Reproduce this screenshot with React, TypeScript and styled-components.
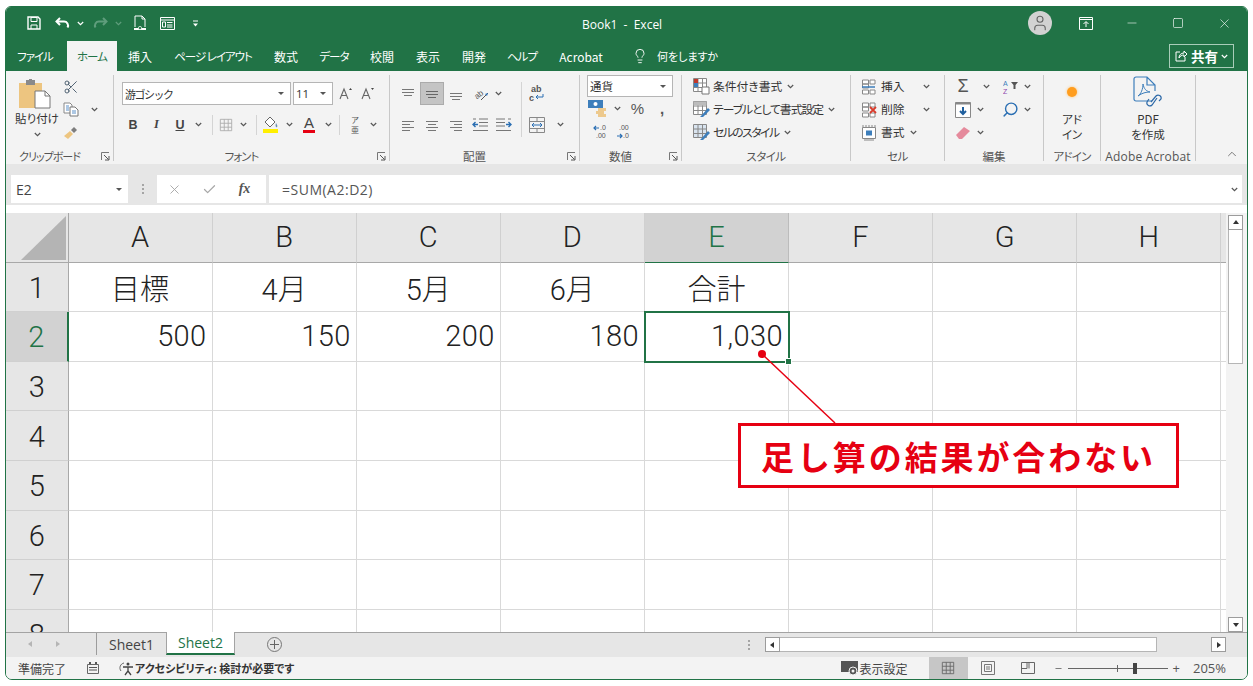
import styled, { createGlobalStyle } from "styled-components";
import { Scissors, X, Check, Minus, Square, Search, Lightbulb, ChevronUp, User } from "lucide-react";
import type { ReactNode } from "react";

const GREEN = "#217346";
const CJK = `"Noto Sans CJK JP", "Noto Sans", sans-serif`;
const LATIN = `"Open Sans", "Noto Sans CJK JP", sans-serif`;
const SHEET = `Roboto, "Noto Sans CJK JP", sans-serif`;

const GlobalStyle = createGlobalStyle`
  html, body { margin: 0; padding: 0; background: #fff; }
  body { font-family: ${CJK}; font-feature-settings: "palt"; overflow: hidden; }
  #root { width: 1253px; height: 686px; }
`;

const Chev = ({ color = "#555" }: { color?: string }) => (
  <svg width="7" height="5" viewBox="0 0 7 5">
    <polyline points="0.8,1 3.5,3.6 6.2,1" fill="none" stroke={color} strokeWidth="1.2" />
  </svg>
);

const Launcher = () => (
  <svg width="9" height="9" viewBox="0 0 9 9">
    <path d="M0.5 8V0.5H8" fill="none" stroke="#777" />
    <path d="M3 3l4.5 4.5M8 4v4H4" fill="none" stroke="#555" />
  </svg>
);

const Lines = ({ widths, color = "#777", w = 16 }: { widths: number[][]; color?: string; w?: number }) => (
  <svg width={w} height="14" viewBox={`0 0 ${w} 14`}>
    {widths.map(([y, x1, x2], i) => (
      <line key={i} x1={x1} x2={x2} y1={y + 0.5} y2={y + 0.5} stroke={color} />
    ))}
  </svg>
);

const GridIcon = ({ color = "#888", size = 16 }: { color?: string; size?: number }) => (
  <svg width={size} height={size} viewBox="0 0 16 16">
    <path d="M1.500 1.500h13v13h-13zM1.500 6h13M1.500 10.500h13M6 1.500v13M10.500 1.500v13" fill="none" stroke={color} />
  </svg>
);

const QatIcons = {
  save: (
    <svg width="14" height="14" viewBox="0 0 14 14">
      <path d="M1 1h10l2 2v10H1z" fill="none" stroke="#fff" strokeWidth="1.400" />
      <path d="M4 1.500h6v4H4zM4 13V9h6v4" fill="none" stroke="#fff" />
    </svg>
  ),
  undo: (
    <svg width="15" height="12" viewBox="0 0 15 12">
      <path d="M5 1L1.500 4.500 5 8" fill="none" stroke="#fff" strokeWidth="2" />
      <path d="M2 4.500h7a4 4 0 0 1 3.500 6" fill="none" stroke="#fff" strokeWidth="2" />
    </svg>
  ),
  redo: (
    <svg width="15" height="12" viewBox="0 0 15 12">
      <path d="M10 1l3.500 3.500L10 8" fill="none" stroke="#5f9d7c" strokeWidth="2" />
      <path d="M13 4.500H6a4 4 0 0 0-3.500 6" fill="none" stroke="#5f9d7c" strokeWidth="2" />
    </svg>
  ),
  preview: (
    <svg width="14" height="16" viewBox="0 0 14 16">
      <path d="M2 12V1h7l3 3v8M9 1v3h3" fill="none" stroke="#fff" />
      <path d="M1 13h12v2H1z" fill="#fff" />
      <circle cx="7" cy="13" r="1.600" fill={GREEN} stroke="#fff" strokeWidth=".7" />
    </svg>
  ),
  form: (
    <svg width="15" height="13" viewBox="0 0 15 13">
      <path d="M.5.5h14v12H.5zM.5 3h14" fill="none" stroke="#fff" />
      <path d="M2.500 5h3v5h-3zM7 5.500h5.500M7 8h5.500M7 10h5.500" fill="none" stroke="#fff" />
    </svg>
  ),
  custom: (
    <svg width="7" height="7" viewBox="0 0 7 7">
      <path d="M1 1h5" stroke="#fff" />
      <path d="M1 3.500h5L3.500 6.500z" fill="#fff" />
    </svg>
  ),
};

const PasteIcon = () => (
  <svg width="38" height="31" viewBox="0 0 38 31">
    <path d="M1 5h23v25H1z" fill="#edc580" />
    <path d="M8 2h9v5H8z" fill="#8a8a8a" />
    <path d="M11 1h3v2h-3z" fill="#8a8a8a" />
    <path d="M17 13h10l5 5v12H17z" fill="#fff" stroke="#777" />
    <path d="M27 13v5h5" fill="none" stroke="#777" />
  </svg>
);

const CopyIcon = () => (
  <svg width="16" height="15" viewBox="0 0 16 15">
    <path d="M1 1h6l2 2v8H1z" fill="#fff" stroke="#888" />
    <path d="M7 5h5l3 3v6H7z" fill="#fff" stroke="#777" />
    <path d="M3 4h3M3 6h3M3 8h3M9 9h4M9 11h4" stroke="#5b8fc7" />
  </svg>
);

const BrushIcon = () => (
  <svg width="16" height="14" viewBox="0 0 16 14">
    <path d="M1 10l6-5 3 3-5 5z" fill="#edc580" />
    <path d="M8 4l3-3 3 3-3 3z" fill="#7d7d7d" />
  </svg>
);

const FontSizeIcon = ({ up }: { up?: boolean }) => (
  <svg width="14" height="13" viewBox="0 0 14 13">
    <path d="M1 12L5 2l4 10M2.500 8.500h5" fill="none" stroke="#666" strokeWidth="1.100" />
    {up ? (
      <path d="M10 3l1.500-2L13 3z" fill="#444" />
    ) : (
      <path d="M10 1h3l-1.500 2z" fill="#444" />
    )}
  </svg>
);

const FillIcon = () => (
  <svg width="16" height="17" viewBox="0 0 16 17">
    <path d="M7 1l5 5-5 5-5-5z" fill="#fff" stroke="#666" />
    <path d="M13 7c1 2 2 3 1 4s-2-1-1-4z" fill="#6d8fb0" />
    <path d="M0 13h15v4H0z" fill="#ffef00" />
  </svg>
);

const OrientIcon = () => (
  <svg width="20" height="18" viewBox="0 0 20 18">
    <text x="3" y="12" fontSize="8" fill="#555" transform="rotate(-40 8 9)" fontFamily="Liberation Sans">ab</text>
    <path d="M10 15l7-7" stroke="#555" />
    <path d="M14 9l3-1-1 3z" fill="#2b6fb3" />
  </svg>
);

const IndentIcon = ({ flip }: { flip?: boolean }) => (
  <svg width="16" height="14" viewBox="0 0 16 14" style={{ transform: flip ? "scaleX(-1)" : undefined }}>
    <path d="M7 1h9M7 4.500h9M7 8h9M1 12.500h15M1 1h3" stroke="#777" />
    <path d="M6 6.500H1M3.500 4L1 6.500 3.500 9" fill="none" stroke="#2b6fb3" strokeWidth="1.400" />
  </svg>
);

const WrapIcon = () => (
  <svg width="16" height="19" viewBox="0 0 16 19">
    <text x="2" y="8" fontSize="9" fontWeight="700" fill="#555" fontFamily="Liberation Sans">ab</text>
    <text x="0" y="17" fontSize="9" fontWeight="700" fill="#555" fontFamily="Liberation Sans">c</text>
    <path d="M14 10v3H7M9 11l-2 2 2 2" fill="none" stroke="#2b6fb3" />
  </svg>
);

const MergeIcon = () => (
  <svg width="16" height="16" viewBox="0 0 16 16">
    <path d="M.5.5h15v15H.5zM.5 4.500h15M.5 11.500h15M8 .5v4M8 11.500v4" fill="none" stroke="#888" />
    <path d="M3 8h10M5 6L3 8l2 2M11 6l2 2-2 2" fill="none" stroke="#2b6fb3" />
  </svg>
);

const AccountIcon = () => (
  <svg width="20" height="17" viewBox="0 0 20 17">
    <path d="M0 0h15v8H0z" fill="#3d7ebb" />
    <circle cx="7.500" cy="4" r="2" fill="#fff" />
    <path d="M10 8h8v3h-8zM8 11h8v3H8zM10 14h8v3h-8z" fill="#edc98d" />
  </svg>
);

const DecimalIcon = ({ inc }: { inc?: boolean }) => (
  <svg width="18" height="16" viewBox="0 0 18 16" fontFamily="Liberation Sans" fontSize="7" fill="#555">
    {inc ? (
      <>
        <path d="M6 4H1M3 2L1 4l2 2" fill="none" stroke="#2b6fb3" strokeWidth="1.200" />
        <text x="7" y="6">.0</text>
        <text x="3" y="14">.00</text>
      </>
    ) : (
      <>
        <text x="4" y="6">.00</text>
        <path d="M2 12h5M5 10l2 2-2 2" fill="none" stroke="#2b6fb3" strokeWidth="1.200" />
        <text x="8" y="14">.0</text>
      </>
    )}
  </svg>
);

const TableTint = ({ kind }: { kind: "cond" | "table" | "style" }) => (
  <svg width="17" height="17" viewBox="0 0 17 17">
    <path d="M.5.5h13v13H.5zM.5 5h13M.5 9.500h13M5 .5v13M9.500.5v13" fill={kind === "style" ? "#d9e4ef" : "#fff"} stroke="#888" />
    {kind === "cond" && <path d="M1 1h4v4H1z" fill="#c0392b" />}
    {kind === "cond" && <path d="M1 5h4v4H1z" fill="#3d7ebb" />}
    {kind === "cond" && <path d="M9 9h7v7H9z" fill="#fff" stroke="#777" />}
    {kind !== "cond" && <path d="M8 15l7-8 2 2-7 7H7z" fill="#3d7ebb" />}
    {kind === "table" && <path d="M.5.5h13v4H.5z" fill="#bcbcbc" />}
  </svg>
);

const CellIcon = ({ kind }: { kind: "insert" | "delete" | "format" }) => (
  <svg width="16" height="16" viewBox="0 0 16 16">
    {kind === "format" ? (
      <>
        <path d="M1.500 2.500h13v11h-13z" fill="#fff" stroke="#888" />
        <path d="M5 5.500h6v5H5z" fill="#3d7ebb" />
        <path d="M1 1h14" stroke="#888" strokeDasharray="2 1" />
        <path d="M3 15h10" stroke="#888" />
      </>
    ) : (
      <>
        <path d="M1.500 1h6v4h-6zM1.500 5h6v4h-6zM1.500 11h6v4h-6zM9 1h5v4H9zM9 11h5v4H9z" fill="#fff" stroke="#888" />
        {kind === "insert" ? (
          <path d="M1 8h13" stroke="#3d7ebb" strokeWidth="1.500" />
        ) : (
          <path d="M9 5l6 6M15 5l-6 6" stroke="#d83b2b" strokeWidth="1.800" />
        )}
      </>
    )}
  </svg>
);

const SortIcon = () => (
  <svg width="16" height="16" viewBox="0 0 16 16">
    <text x="0" y="7" fontSize="7" fill="#3d7ebb" fontFamily="Liberation Sans">A</text>
    <text x="0" y="15" fontSize="7" fill="#8e44ad" fontFamily="Liberation Sans">Z</text>
    <path d="M8 3h7l-2.500 3v4h-2V6z" fill="#555" />
  </svg>
);

const FillDownIcon = () => (
  <svg width="16" height="16" viewBox="0 0 16 16">
    <path d="M.5.5h15v15H.5z" fill="#fff" stroke="#888" />
    <path d="M.5.5h15v2H.5z" fill="#888" />
    <path d="M8 5v7M5 9l3 3 3-3" fill="none" stroke="#1f5f9e" strokeWidth="2" />
  </svg>
);

const EraserIcon = () => (
  <svg width="16" height="14" viewBox="0 0 16 14">
    <path d="M1 9l8-8 6 4-8 8H4z" fill="#e58a9c" />
  </svg>
);

const AcrobatIcon = () => (
  <svg width="30" height="34" viewBox="0 0 30 34">
    <path d="M19 25H3a2 2 0 0 1-2-2V3a2 2 0 0 1 2-2h11l8 8v6M14 1v8h8" fill="none" stroke="#3d7ebb" strokeWidth="1.200" />
    <path d="M5 20c3-2 5-7 5-12 1 5 3 7 7 8-4 0-8 1-12 4z" fill="none" stroke="#3d7ebb" />
    <path d="M18 26l5-6a3 3 0 0 1 5 3l-2 2M24 22l-5 7a3 3 0 0 1-5-3l2-3" fill="none" stroke="#2f6aa8" strokeWidth="1.200" />
  </svg>
);

const Page = styled.div`
  padding: 6px 0 0 5px;
`;

const Window = styled.div`
  position: relative;
  box-sizing: border-box;
  width: 1243px;
  height: 674px;
  display: flex;
  flex-direction: column;
  border: 1px solid ${GREEN};
  border-radius: 6px 6px 7px 7px;
  overflow: hidden;
  background: #fff;
`;

const Tight = styled.span<{ $ls: number; $fs?: number }>`
  letter-spacing: ${(p) => p.$ls}px;
  ${(p) => (p.$fs ? `font-size: ${p.$fs}px;` : "")}
`;

const TitleBar = styled.div`
  height: 34px;
  flex: none;
  box-sizing: border-box;
  padding-bottom: 2px;
  display: flex;
  align-items: center;
  position: relative;
  background: ${GREEN};
  color: #fff;
`;

const QatSlot = styled.span<{ $ml: number }>`
  margin-left: ${(p) => p.$ml}px;
  display: inline-flex;
  align-items: center;
`;

const Title = styled.div`
  position: absolute;
  left: 576px;
  top: 9px;
  font: 12px/17px ${LATIN};
  white-space: pre;
`;

const WinControls = styled.div`
  margin-left: auto;
  display: flex;
  align-items: center;
`;

const Avatar = styled.span`
  width: 24px;
  height: 24px;
  border-radius: 50%;
  background: #d2d2d2;
  display: flex;
  align-items: center;
  justify-content: center;
  color: #666;
  margin-right: 11px;
`;

const WinBtn = styled.span`
  width: 46px;
  display: flex;
  justify-content: center;
`;

const TabBar = styled.div`
  height: 30px;
  flex: none;
  display: flex;
  align-items: stretch;
  background: ${GREEN};
  padding-left: 1px;
`;

const Tab = styled.div<{ $w: number; $active?: boolean; $ml?: number; $kana?: boolean }>`
  width: ${(p) => p.$w}px;
  margin-left: ${(p) => p.$ml ?? 0}px;
  display: flex;
  align-items: center;
  justify-content: center;
  font-size: ${(p) => (p.$kana ? 11.5 : 12)}px;
  letter-spacing: ${(p) => (p.$kana ? -1 : 0)}px;
  white-space: nowrap;
  color: ${(p) => (p.$active ? GREEN : "#fff")};
  background: ${(p) => (p.$active ? "#f3f3f3" : "transparent")};
`;

const TellMe = styled.div`
  margin-left: 17px;
  display: flex;
  align-items: center;
  gap: 9px;
  color: #fff;
  font-size: 11px;
`;

const ShareBtn = styled.div`
  margin: 3px 13px 3px auto;
  box-sizing: border-box;
  width: 65px;
  display: flex;
  align-items: center;
  justify-content: center;
  gap: 3px;
  border: 1px solid #a9cdb9;
  color: #fff;
  font-size: 13.500px;
  font-weight: 700;
`;

const Ribbon = styled.div`
  height: 93px;
  flex: none;
  box-sizing: border-box;
  padding: 4px 0 3px;
  display: flex;
  background: #f3f3f3;
  color: #333;
`;

const Group = styled.div<{ $w: number }>`
  width: ${(p) => p.$w}px;
  box-sizing: border-box;
  flex: none;
  display: flex;
  flex-direction: column;
  border-right: 1px solid #c8c8c8;
`;

const GroupBody = styled.div<{ $pl?: number; $pt?: number; $col?: boolean }>`
  height: 72px;
  flex: none;
  box-sizing: border-box;
  padding: ${(p) => p.$pt ?? 0}px 0 0 ${(p) => p.$pl ?? 0}px;
  display: flex;
  flex-direction: ${(p) => (p.$col ? "column" : "row")};
`;

const GroupLabel = styled.div`
  display: flex;
  align-items: center;
  flex: none;
  height: 15px;
  margin-top: 2px;
  font-size: 11.500px;
  line-height: 15px;
  color: #555;
  white-space: nowrap;
`;

const LabelText = styled.span`
  flex: 1;
  text-align: center;
`;

const LauncherSlot = styled.span`
  width: 20px;
  flex: none;
  display: flex;
  justify-content: flex-end;
  padding-right: 3px;
  box-sizing: border-box;
`;

const LatinLabel = styled.span`
  font: 12px ${LATIN};
  letter-spacing: 0.2px;
`;

const RibbonEnd = styled.div`
  flex: 1;
  display: flex;
  align-items: flex-end;
  justify-content: flex-end;
  padding-right: 8px;
  color: #555;
`;

const Row = styled.div<{ $h?: number; $pl?: number }>`
  height: ${(p) => p.$h ?? 23}px;
  flex: none;
  display: flex;
  align-items: center;
  padding-left: ${(p) => p.$pl ?? 0}px;
`;

const Tool = styled.span<{ $w: number; $selected?: boolean }>`
  width: ${(p) => p.$w}px;
  height: 23px;
  flex: none;
  display: flex;
  align-items: center;
  justify-content: center;
  box-sizing: border-box;
  background: ${(p) => (p.$selected ? "#c4c4c4" : "transparent")};
  border: ${(p) => (p.$selected ? "1px solid #ababab" : "none")};
`;

const Sep = styled.span<{ $w: number }>`
  width: ${(p) => p.$w}px;
  height: 20px;
  flex: none;
  display: flex;
  justify-content: center;
  &::before {
    content: "";
    width: 1px;
    background: #d4d4d4;
  }
`;

const FullSep = styled(Sep)`
  height: 55px;
`;

const PasteCol = styled.div`
  width: 46px;
  flex: none;
  display: flex;
  flex-direction: column;
  align-items: center;
  padding-top: 3px;
  font-size: 11.500px;
  line-height: 15px;
  white-space: nowrap;
  color: #333;
`;

const PasteText = styled.span`
  margin-top: 2px;
  margin-bottom: 6px;
`;

const ToolCol = styled.div<{ $pt?: number }>`
  display: flex;
  flex-direction: column;
  padding-top: ${(p) => p.$pt ?? 0}px;
`;

const SelectBox = styled.div<{ $w: number; $latin?: boolean; $h?: number }>`
  width: ${(p) => p.$w}px;
  height: ${(p) => p.$h ?? 23}px;
  box-sizing: border-box;
  display: flex;
  align-items: center;
  justify-content: space-between;
  padding: 0 6px 0 2px;
  background: #fff;
  border: 1px solid #b5b5b5;
  font: ${(p) => (p.$latin ? `11.500px ${LATIN}` : `11.500px ${CJK}`)};
  color: #333;
  & + & { margin-left: 2px; }
`;

const Caret = styled.span`
  width: 0;
  height: 0;
  border-left: 3px solid transparent;
  border-right: 3px solid transparent;
  border-top: 3px solid #555;
`;

const GlyphA = styled.span<{ $size?: number }>`
  font: ${(p) => p.$size ?? 13}px "Liberation Sans", sans-serif;
  color: #555;
`;

const FormatGlyph = styled.span<{ $italic?: boolean; $underline?: boolean }>`
  font-style: ${(p) => (p.$italic ? "italic" : "normal")};
  font-weight: 700;
  font-size: 12.500px;
  font-family: ${(p) => (p.$italic ? `"Liberation Serif", serif` : `"Liberation Sans", sans-serif`)};
  text-decoration: ${(p) => (p.$underline ? "underline" : "none")};
  color: #444;
`;

const FontColorA = styled.span`
  font: 400 15px/14px "Liberation Sans", sans-serif;
  color: #444;
  border-bottom: 3px solid #e60012;
  padding: 0 1px;
`;

const Ruby = styled.span`
  font-size: 8px;
  line-height: 10px;
  color: #555;
  text-align: center;
  width: 10px;
`;

const ActionRow = styled.div<{ $pl?: number }>`
  height: 23px;
  flex: none;
  display: flex;
  align-items: center;
  padding-left: ${(p) => p.$pl ?? 2}px;
  font-size: 11.800px;
  color: #333;
  white-space: nowrap;
`;

const ActionText = styled.span<{ $ml: number; $mr: number; $ls?: number }>`
  margin-left: ${(p) => p.$ml}px;
  margin-right: ${(p) => p.$mr}px;
  padding-bottom: 2px;
  letter-spacing: ${(p) => p.$ls ?? 0}px;
`;

const CenterCol = styled.div<{ $pt: number }>`
  width: 100%;
  padding-top: ${(p) => p.$pt}px;
  display: flex;
  flex-direction: column;
  align-items: center;
  font-size: 11.500px;
  line-height: 15px;
  color: #333;
  text-align: center;
`;

const AddinDot = styled.span`
  width: 10px;
  height: 10px;
  border-radius: 50%;
  background: #ff9d1e;
  box-shadow: 0 0 3px #ffc16e;
  margin-bottom: 15px;
`;

const AcrobatGap = styled.span`
  margin-bottom: 2px;
  display: flex;
`;

const FormulaBar = styled.div`
  height: 41px;
  flex: none;
  box-sizing: border-box;
  padding: 11px 5px 2px 5px;
  display: flex;
  align-items: stretch;
  background: #e6e6e6;
`;

const NameBox = styled.div`
  width: 117px;
  box-sizing: border-box;
  padding: 0 6px 0 5px;
  display: flex;
  align-items: center;
  justify-content: space-between;
  background: #fff;
  font: 14px ${LATIN};
  color: #444;
`;

const GripDots = styled.span`
  width: 29px;
  display: flex;
  flex-direction: column;
  align-items: center;
  justify-content: center;
  gap: 2px;
  & > i {
    width: 2px;
    height: 2px;
    background: #a5a5a5;
  }
`;

const FxBox = styled.div`
  width: 109px;
  display: flex;
  align-items: center;
  background: #fff;
  color: #a8a8a8;
`;

const FxSlot = styled.span`
  width: 35px;
  display: flex;
  justify-content: center;
`;

const FxText = styled.span`
  font: italic 700 14px "Liberation Serif", serif;
  color: #555;
`;

const FormulaInput = styled.div`
  flex: 1;
  margin-left: 3px;
  padding: 0 4px 0 13px;
  display: flex;
  align-items: center;
  justify-content: space-between;
  background: #fff;
  font: 14px ${LATIN};
  letter-spacing: 0.5px;
  color: #555;
`;

const SheetArea = styled.div`
  flex: 1;
  min-height: 0;
  display: flex;
  padding-top: 8px;
  background: #fff;
`;

const SheetGrid = styled.div`
  width: 1220px;
  flex: none;
  overflow: hidden;
  display: grid;
  grid-template-columns: 62.500px repeat(8, 144.100px) 1fr;
  grid-template-rows: 49.600px;
  grid-auto-rows: 49.600px;
`;

const HeaderCell = styled.div<{ $selected?: boolean }>`
  box-sizing: border-box;
  display: flex;
  align-items: center;
  justify-content: center;
  background: ${(p) => (p.$selected ? "#d2d2d2" : "#e6e6e6")};
  color: ${(p) => (p.$selected ? GREEN : "#222")};
  border-right: 1px solid ${(p) => (p.$selected ? "#bcbcbc" : "#d0d0d0")};
  font: 300 29px ${SHEET};
`;

const ColHeader = styled(HeaderCell)`
  border-bottom: 1.500px solid ${(p) => (p.$selected ? GREEN : "#a8a8a8")};
`;

const RowHeader = styled(HeaderCell)`
  padding-top: 2px;
  border-bottom: 1px solid #d0d0d0;
  border-right: ${(p) => (p.$selected ? `2px solid ${GREEN}` : "1px solid #a8a8a8")};
`;

const Corner = styled(HeaderCell)`
  align-items: flex-end;
  justify-content: flex-end;
  padding: 0 2px 2px 0;
  border-right: 1px solid #a8a8a8;
  border-bottom: 1.500px solid #a8a8a8;
`;

const Cell = styled.div<{ $align?: string; $selected?: boolean }>`
  position: relative;
  box-sizing: border-box;
  display: flex;
  align-items: center;
  justify-content: ${(p) => (p.$align === "right" ? "flex-end" : "center")};
  padding: 0 5px;
  border-right: 1px solid #d9d9d9;
  border-bottom: 1px solid #d9d9d9;
  font: 300 29px ${SHEET};
  font-feature-settings: normal;
  letter-spacing: ${(p) => (p.$align === "right" ? 0.4 : 0)}px;
  color: #222;
  white-space: nowrap;
  ${(p) =>
    p.$selected &&
    `
    outline: 2px solid ${GREEN};
    outline-offset: -1px;
    z-index: 1;
    &::after {
      content: "";
      position: absolute;
      right: -4px;
      bottom: -4px;
      width: 5px;
      height: 5px;
      background: ${GREEN};
      border: 1px solid #fff;
    }
  `}
`;

const VScroll = styled.div`
  flex: 1;
  display: flex;
  flex-direction: column;
  padding: 2px 4px 0 2px;
  background: #f3f3f3;
`;

const ScrollBtn = styled.div<{ $w?: number }>`
  box-sizing: border-box;
  width: ${(p) => p.$w ?? 15}px;
  height: 15px;
  flex: none;
  display: flex;
  align-items: center;
  justify-content: center;
  background: #fff;
  border: 1px solid #9c9c9c;
`;

const VThumb = styled.div`
  height: 134px;
  flex: none;
  box-sizing: border-box;
  background: #fff;
  border: 1px solid #b5b5b5;
  border-top: none;
`;

const VSpacer = styled.div`
  flex: 1;
`;

const Arrow = styled.span<{ $dir: "up" | "down" | "left" | "right"; $color?: string }>`
  width: 0;
  height: 0;
  border: 3.500px solid transparent;
  ${(p) => {
    const side = { up: "bottom", down: "top", left: "right", right: "left" }[p.$dir];
    const c = p.$color ?? "#333";
    return `border-${side}: 4px solid ${c};`;
  }}
  ${(p) => (p.$dir === "up" ? "margin-top: -4px;" : "")}
  ${(p) => (p.$dir === "down" ? "margin-top: 4px;" : "")}
  ${(p) => (p.$dir === "left" ? "margin-left: -4px;" : "")}
  ${(p) => (p.$dir === "right" ? "margin-left: 4px;" : "")}
`;

const SheetBar = styled.div`
  height: 25px;
  flex: none;
  box-sizing: border-box;
  display: flex;
  align-items: flex-start;
  background: #e6e6e6;
  border-top: 1px solid #a3a3a3;
`;

const NavArrows = styled.div`
  width: 91px;
  height: 22px;
  box-sizing: border-box;
  padding-left: 23px;
  display: flex;
  align-items: center;
  gap: 20px;
  border-right: 1px solid #9c9c9c;
  flex: none;
`;

const SheetTab = styled.div<{ $active?: boolean }>`
  box-sizing: border-box;
  width: 69px;
  height: ${(p) => (p.$active ? 23 : 22)}px;
  margin-top: ${(p) => (p.$active ? -1 : 0)}px;
  display: flex;
  align-items: center;
  justify-content: center;
  font: 14px ${LATIN};
  color: ${(p) => (p.$active ? GREEN : "#444")};
  background: ${(p) => (p.$active ? "#fff" : "transparent")};
  ${(p) => (p.$active ? `border-bottom: 2px solid ${GREEN}; border-left: 1px solid #a3a3a3; border-right: 1px solid #a3a3a3;` : "")}
`;

const AddSheet = styled.span`
  margin: 4px 0 0 32px;
  width: 15px;
  height: 15px;
  box-sizing: border-box;
  border: 1px solid #777;
  border-radius: 50%;
  display: flex;
  align-items: center;
  justify-content: center;
  color: #666;
`;

const HScroll = styled.div`
  margin-left: auto;
  margin-right: 21px;
  margin-top: 4px;
  display: flex;
  align-items: center;
`;

const HDots = styled(GripDots)`
  width: 16px;
  margin-right: 8px;
`;

const HThumb = styled.div`
  width: 377px;
  height: 15px;
  box-sizing: border-box;
  background: #fff;
  border: 1px solid #b5b5b5;
  border-left: none;
  margin-right: 54px;
`;

const StatusBar = styled.div`
  height: 22px;
  flex: none;
  display: flex;
  align-items: stretch;
  background: #f3f3f3;
  font-size: 12px;
  color: #444;
`;

const StatusItem = styled.span<{ $ml: number; $bold?: boolean }>`
  margin-left: ${(p) => p.$ml}px;
  display: flex;
  align-items: center;
  gap: 1px;
  white-space: nowrap;
  font-weight: ${(p) => (p.$bold ? 700 : 400)};
  font-size: ${(p) => (p.$bold ? 11 : 12)}px;
  color: ${(p) => (p.$bold ? "#333" : "#444")};
`;

const StatusRight = styled.div`
  margin-left: auto;
  display: flex;
  align-items: stretch;
  padding-right: 21px;
`;

const ViewBtn = styled.span<{ $active?: boolean }>`
  width: 39px;
  margin-left: ${(p) => (p.$active ? 21 : 1)}px;
  display: flex;
  align-items: center;
  justify-content: center;
  background: ${(p) => (p.$active ? "#c6c6c6" : "transparent")};
`;

const Zoomer = styled.span`
  display: flex;
  align-items: center;
  margin-left: 6px;
  color: #555;
  font: 13px ${LATIN};
`;

const SliderTrack = styled.span`
  position: relative;
  width: 100px;
  height: 1px;
  margin: 0 5px;
  background: #666;
`;

const SliderTick = styled.span`
  position: absolute;
  left: 49px;
  top: -3px;
  width: 1px;
  height: 7px;
  background: #666;
`;

const SliderThumb = styled.span`
  position: absolute;
  left: 65px;
  top: -5px;
  width: 4px;
  height: 11px;
  background: #444;
`;

const ZoomPct = styled.span`
  margin-left: 13px;
`;

const Connector = styled.svg`
  position: absolute;
  left: 744px;
  top: 338px;
  z-index: 2;
`;

const Callout = styled.div`
  position: absolute;
  left: 732px;
  top: 416px;
  width: 441px;
  height: 65px;
  box-sizing: border-box;
  z-index: 2;
  display: flex;
  align-items: center;
  justify-content: center;
  background: #fff;
  border: 3px solid #e60012;
  color: #e60012;
  font: 700 33px ${CJK};
  font-feature-settings: normal;
  letter-spacing: 2.900px;
`;

const columns = ["A", "B", "C", "D", "E", "F", "G", "H"];
const sheetRows: Record<number, { text: string; align?: string }[]> = {
  1: [{ text: "目標" }, { text: "4月" }, { text: "5月" }, { text: "6月" }, { text: "合計" }],
  2: [
    { text: "500", align: "right" },
    { text: "150", align: "right" },
    { text: "200", align: "right" },
    { text: "180", align: "right" },
    { text: "1,030", align: "right" },
  ],
};

const tabs: { label: string; w: number; ml?: number; active?: boolean; kana?: boolean }[] = [
  { label: "ファイル", w: 56, kana: true },
  { label: "ホーム", w: 50, ml: 4, active: true, kana: true },
  { label: "挿入", w: 46 },
  { label: "ページ レイアウト", w: 100, kana: true },
  { label: "数式", w: 46 },
  { label: "データ", w: 50, kana: true },
  { label: "校閲", w: 46 },
  { label: "表示", w: 46 },
  { label: "開発", w: 46 },
  { label: "ヘルプ", w: 50, kana: true },
  { label: "Acrobat", w: 68 },
];

function RibbonGroup({ w, label, launcher, children }: { w: number; label: ReactNode; launcher?: boolean; children: ReactNode }) {
  return (
    <Group $w={w}>
      {children}
      <GroupLabel>
        <LabelText>{label}</LabelText>
        {launcher && <LauncherSlot><Launcher /></LauncherSlot>}
      </GroupLabel>
    </Group>
  );
}

function Rows({ r }: { r: number }) {
  const data = sheetRows[r] ?? [];
  return (
    <>
      <RowHeader $selected={r === 2}>{r}</RowHeader>
      {columns.map((c, i) => (
        <Cell key={c} $align={data[i]?.align} $selected={r === 2 && c === "E"}>
          {data[i]?.text}
        </Cell>
      ))}
      <Cell />
    </>
  );
}

export default function App() {
  return (
    <>
      <GlobalStyle />
      <Page>
        <Window>
          <TitleBar>
            <QatSlot $ml={21}>{QatIcons.save}</QatSlot>
            <QatSlot $ml={14}>{QatIcons.undo}</QatSlot>
            <QatSlot $ml={7}><Chev color="#fff" /></QatSlot>
            <QatSlot $ml={9}>{QatIcons.redo}</QatSlot>
            <QatSlot $ml={7}><Chev color="#5f9d7c" /></QatSlot>
            <QatSlot $ml={11}>{QatIcons.preview}</QatSlot>
            <QatSlot $ml={13}>{QatIcons.form}</QatSlot>
            <QatSlot $ml={17}>{QatIcons.custom}</QatSlot>
            <Title>Book1  -  Excel</Title>
            <WinControls>
              <Avatar><User size={18} strokeWidth={1.500} /></Avatar>
              <WinBtn>
                <svg width="14" height="13" viewBox="0 0 14 13">
                  <path d="M.5.5h13v12H.5zM.5 2.500h13" fill="none" stroke="#fff" />
                  <path d="M7 10V5M4.500 7L7 4.500 9.500 7" fill="none" stroke="#fff" />
                </svg>
              </WinBtn>
              <WinBtn><Minus size={14} strokeWidth={1} /></WinBtn>
              <WinBtn><Square size={12} strokeWidth={1.300} /></WinBtn>
              <WinBtn><X size={15} strokeWidth={1} /></WinBtn>
            </WinControls>
          </TitleBar>

          <TabBar>
            {tabs.map((t) => (
              <Tab key={t.label} $w={t.w} $ml={t.ml} $active={t.active} $kana={t.kana}>{t.label}</Tab>
            ))}
            <TellMe>
              <Lightbulb size={16} strokeWidth={1.400} />
              何をしますか
            </TellMe>
            <ShareBtn>
              <svg width="13" height="12" viewBox="0 0 13 12">
                <path d="M5 2H1v9h9V7M4 8c0-3 2-5 5-5V1l3 3-3 3V5C7 5 5 6 4 8z" fill="none" stroke="#fff" />
              </svg>
              共有
              <Chev color="#fff" />
            </ShareBtn>
          </TabBar>

          <Ribbon>
            <RibbonGroup w={108} label={<Tight $ls={-1} $fs={11}>クリップボード</Tight>} launcher>
              <GroupBody $pl={8}>
                <PasteCol>
                  <PasteIcon />
                  <PasteText>貼り付け</PasteText>
                  <Chev />
                </PasteCol>
                <ToolCol>
                  <Tool $w={22}><Scissors size={16} color="#46596b" strokeWidth={1.400} /></Tool>
                  <Tool $w={22}><CopyIcon /></Tool>
                  <Tool $w={22}><BrushIcon /></Tool>
                </ToolCol>
                <ToolCol $pt={23}>
                  <Tool $w={24}><Chev /></Tool>
                </ToolCol>
              </GroupBody>
            </RibbonGroup>

            <RibbonGroup w={276} label={<Tight $ls={-1}>フォント</Tight>} launcher>
              <GroupBody $pl={8} $pt={7} $col>
                <Row>
                  <SelectBox $w={169}><Tight $ls={-1.500} $fs={11}>游ゴシック</Tight><Caret /></SelectBox>
                  <SelectBox $w={40} $latin>11<Caret /></SelectBox>
                  <Tool $w={25}><FontSizeIcon up /></Tool>
                  <Tool $w={20}><FontSizeIcon /></Tool>
                </Row>
                <Row $h={8} />
                <Row>
                  <Tool $w={22}><FormatGlyph>B</FormatGlyph></Tool>
                  <Tool $w={25}><FormatGlyph $italic>I</FormatGlyph></Tool>
                  <Tool $w={22}><FormatGlyph $underline>U</FormatGlyph></Tool>
                  <Tool $w={15}><Chev /></Tool>
                  <Sep $w={12} />
                  <Tool $w={16}><GridIcon color="#aaa" size={14} /></Tool>
                  <Tool $w={18}><Chev /></Tool>
                  <Sep $w={8} />
                  <Tool $w={22}><FillIcon /></Tool>
                  <Tool $w={14}><Chev /></Tool>
                  <Tool $w={26}><FontColorA>A</FontColorA></Tool>
                  <Tool $w={12}><Chev /></Tool>
                  <Sep $w={10} />
                  <Tool $w={22}><Ruby>ア<br />亜</Ruby></Tool>
                  <Tool $w={14}><Chev /></Tool>
                </Row>
              </GroupBody>
            </RibbonGroup>

            <RibbonGroup w={190} label="配置" launcher>
              <GroupBody $pl={6} $pt={7}>
                <ToolCol>
                  <Row>
                    <Tool $w={24}><Lines widths={[[2, 2, 14], [5, 2, 14], [8, 4, 12]]} /></Tool>
                    <Tool $w={24} $selected><Lines widths={[[4, 2, 14], [7, 2, 14], [10, 4, 12]]} color="#666" /></Tool>
                    <Tool $w={24}><Lines widths={[[6, 2, 14], [9, 2, 14], [12, 4, 12]]} /></Tool>
                    <Tool $w={25}><OrientIcon /></Tool>
                    <Tool $w={10}><Chev /></Tool>
                  </Row>
                  <Row $h={8} />
                  <Row>
                    <Tool $w={24}><Lines widths={[[3, 2, 14], [6, 2, 10], [9, 2, 14], [12, 2, 10]]} /></Tool>
                    <Tool $w={24}><Lines widths={[[3, 2, 14], [6, 4, 12], [9, 2, 14], [12, 4, 12]]} /></Tool>
                    <Tool $w={24}><Lines widths={[[3, 2, 14], [6, 6, 14], [9, 2, 14], [12, 6, 14]]} /></Tool>
                    <Tool $w={24}><IndentIcon /></Tool>
                    <Tool $w={24}><IndentIcon flip /></Tool>
                  </Row>
                </ToolCol>
                <FullSep $w={10} />
                <ToolCol>
                  <Row><Tool $w={22}><WrapIcon /></Tool></Row>
                  <Row $h={8} />
                  <Row>
                    <Tool $w={22}><MergeIcon /></Tool>
                    <Tool $w={24}><Chev /></Tool>
                  </Row>
                </ToolCol>
              </GroupBody>
            </RibbonGroup>

            <RibbonGroup w={102} label="数値" launcher>
              <GroupBody $pl={7} $col>
                <SelectBox $w={86} $h={22}>通貨<Caret /></SelectBox>
                <Row>
                  <Tool $w={22}><AccountIcon /></Tool>
                  <Tool $w={16}><Chev /></Tool>
                  <Tool $w={25}><GlyphA $size={15}>%</GlyphA></Tool>
                  <Tool $w={24}><GlyphA $size={15}><b>,</b></GlyphA></Tool>
                </Row>
                <Row $pl={4}>
                  <Tool $w={22}><DecimalIcon inc /></Tool>
                  <Tool $w={22}><DecimalIcon /></Tool>
                </Row>
              </GroupBody>
            </RibbonGroup>

            <RibbonGroup w={169} label={<Tight $ls={-0.500}>スタイル</Tight>}>
              <GroupBody $col>
                <ActionRow $pl={11}><TableTint kind="cond" /><ActionText $ml={3} $mr={5}>条件付き書式</ActionText><Chev /></ActionRow>
                <ActionRow $pl={11}><TableTint kind="table" /><ActionText $ml={3} $mr={5} $ls={-1}>テーブルとして書式設定</ActionText><Chev /></ActionRow>
                <ActionRow $pl={11}><TableTint kind="style" /><ActionText $ml={3} $mr={5} $ls={-1.500}>セルのスタイル</ActionText><Chev /></ActionRow>
              </GroupBody>
            </RibbonGroup>

            <RibbonGroup w={94} label={<Tight $ls={-0.500}>セル</Tight>}>
              <GroupBody $col>
                <ActionRow $pl={10}><CellIcon kind="insert" /><ActionText $ml={4} $mr={18}>挿入</ActionText><Chev /></ActionRow>
                <ActionRow $pl={10}><CellIcon kind="delete" /><ActionText $ml={4} $mr={18}>削除</ActionText><Chev /></ActionRow>
                <ActionRow $pl={10}><CellIcon kind="format" /><ActionText $ml={4} $mr={5}>書式</ActionText><Chev /></ActionRow>
              </GroupBody>
            </RibbonGroup>

            <RibbonGroup w={99} label="編集">
              <GroupBody $pl={7} $col>
                <Row>
                  <Tool $w={22}><GlyphA $size={18}>Σ</GlyphA></Tool>
                  <Tool $w={24}><Chev /></Tool>
                  <Tool $w={25}><SortIcon /></Tool>
                  <Tool $w={8}><Chev /></Tool>
                </Row>
                <Row>
                  <Tool $w={22}><FillDownIcon /></Tool>
                  <Tool $w={12}><Chev /></Tool>
                  <Tool $w={12} />
                  <Tool $w={25}><Search size={17} color="#2b6fb3" strokeWidth={2} style={{ transform: "scaleX(-1)" }} /></Tool>
                  <Tool $w={8}><Chev /></Tool>
                </Row>
                <Row>
                  <Tool $w={22}><EraserIcon /></Tool>
                  <Tool $w={12}><Chev /></Tool>
                </Row>
              </GroupBody>
            </RibbonGroup>

            <RibbonGroup w={57} label={<Tight $ls={-0.700}>アドイン</Tight>}>
              <GroupBody>
                <CenterCol $pt={12}>
                  <AddinDot />
                  アド<br />イン
                </CenterCol>
              </GroupBody>
            </RibbonGroup>

            <RibbonGroup w={95} label={<LatinLabel>Adobe Acrobat</LatinLabel>}>
              <GroupBody>
                <CenterCol $pt={1}>
                  <AcrobatGap><AcrobatIcon /></AcrobatGap>
                  PDF<br />を作成
                </CenterCol>
              </GroupBody>
            </RibbonGroup>

            <RibbonEnd><ChevronUp size={14} strokeWidth={1.300} /></RibbonEnd>
          </Ribbon>

          <FormulaBar>
            <NameBox>E2<Caret /></NameBox>
            <GripDots><i /><i /><i /></GripDots>
            <FxBox>
              <FxSlot><X size={15} strokeWidth={1.500} /></FxSlot>
              <FxSlot><Check size={15} strokeWidth={2} /></FxSlot>
              <FxSlot><FxText>fx</FxText></FxSlot>
            </FxBox>
            <FormulaInput>=SUM(A2:D2)<Chev /></FormulaInput>
          </FormulaBar>

          <SheetArea>
            <SheetGrid>
              <Corner>
                <svg width="45" height="44" viewBox="0 0 45 44">
                  <path d="M0 44L45 0v44z" fill="#b4b4b4" />
                </svg>
              </Corner>
              {columns.map((c) => (
                <ColHeader key={c} $selected={c === "E"}>{c}</ColHeader>
              ))}
              <ColHeader />
              {[1, 2, 3, 4, 5, 6, 7, 8].map((r) => (
                <Rows key={r} r={r} />
              ))}
            </SheetGrid>
            <VScroll>
              <ScrollBtn><Arrow $dir="up" /></ScrollBtn>
              <VThumb />
              <VSpacer />
              <ScrollBtn><Arrow $dir="down" /></ScrollBtn>
            </VScroll>
          </SheetArea>

          <SheetBar>
            <NavArrows>
              <Arrow $dir="left" $color="#b5b5b5" />
              <Arrow $dir="right" $color="#b5b5b5" />
            </NavArrows>
            <SheetTab>Sheet1</SheetTab>
            <SheetTab $active>Sheet2</SheetTab>
            <AddSheet><svg width="9" height="9" viewBox="0 0 9 9"><path d="M4.500 0v9M0 4.500h9" stroke="#666" /></svg></AddSheet>
            <HScroll>
              <HDots><i /><i /><i /></HDots>
              <ScrollBtn><Arrow $dir="left" /></ScrollBtn>
              <HThumb />
              <ScrollBtn><Arrow $dir="right" /></ScrollBtn>
            </HScroll>
          </SheetBar>

          <StatusBar>
            <StatusItem $ml={12}>準備完了</StatusItem>
            <StatusItem $ml={21}>
              <svg width="12" height="12" viewBox="0 0 12 12">
                <path d="M.5 2.500h11v9H.5z" fill="none" stroke="#666" />
                <path d="M2 0h2v2H2zM8 0h2v2H8zM2 5h8v1H2zM2 7.500h8v1H2z" fill="#555" />
              </svg>
            </StatusItem>
            <StatusItem $ml={19} $bold>
              <svg width="16" height="15" viewBox="0 0 16 15">
                <path d="M6 2a5 5 0 0 0-3 8" fill="none" stroke="#666" />
                <circle cx="10" cy="3" r="1.500" fill="#444" />
                <path d="M5 6h10M10 6v4l-3 4M10 10l3 4" fill="none" stroke="#444" strokeWidth="1.300" />
              </svg>
              アクセシビリティ: 検討が必要です
            </StatusItem>
            <StatusRight>
              <StatusItem $ml={0}>
                <svg width="18" height="15" viewBox="0 0 18 15">
                  <path d="M0 0h17v11H0z" fill="#555" />
                  <circle cx="12" cy="10" r="4" fill="#555" stroke="#f3f3f3" />
                  <circle cx="12" cy="10" r="1.500" fill="#f3f3f3" />
                </svg>
                表示設定
              </StatusItem>
              <ViewBtn $active><GridIcon color="#666" size={14} /></ViewBtn>
              <ViewBtn>
                <svg width="14" height="14" viewBox="0 0 14 14">
                  <path d="M.5.5h13v13H.5zM3.500 3.500h7v7h-7zM5 6h4M5 8h4" fill="none" stroke="#777" />
                </svg>
              </ViewBtn>
              <ViewBtn>
                <svg width="14" height="12" viewBox="0 0 14 12">
                  <path d="M.5.5h13v11H.5zM6 .5v6h-5.500M6 .5h2v6" fill="none" stroke="#666" />
                </svg>
              </ViewBtn>
              <Zoomer>
                <Minus size={9} />
                <SliderTrack>
                  <SliderTick />
                  <SliderThumb />
                </SliderTrack>
                +
                <ZoomPct>205%</ZoomPct>
              </Zoomer>
            </StatusRight>
          </StatusBar>

          <Connector width="100" height="90" viewBox="0 0 100 90">
            <line x1="12" y1="9" x2="85" y2="78" stroke="#e60012" strokeWidth="1.500" />
            <circle cx="12" cy="9" r="4" fill="#e60012" />
          </Connector>
          <Callout>足し算の結果が合わない</Callout>
        </Window>
      </Page>
    </>
  );
}
